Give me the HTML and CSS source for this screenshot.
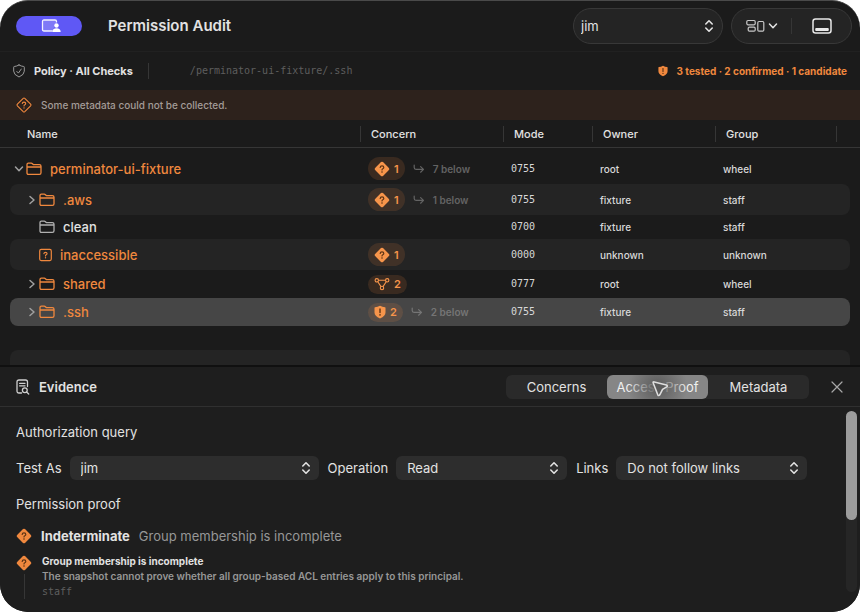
FILE: index.html
```html
<!DOCTYPE html>
<html lang="en">
<head>
<meta charset="utf-8">
<meta name="viewport" content="width=device-width, initial-scale=1">
<title>Permission Audit</title>
<link rel="stylesheet" href="styles.css">
</head>
<body>
<svg class="defs" aria-hidden="true">
  <symbol id="folder" viewBox="0 0 16 14"><path d="M1 11V2.6Q1 1.2 2.4 1.2H5.2Q5.9 1.2 6.4 1.7L7 2.3Q7.4 2.7 8 2.7H13.4Q15 2.7 15 4.2V10.8Q15 12.4 13.4 12.4H2.4Q1 12.4 1 11ZM1 5H15" fill="none" stroke="currentColor" stroke-width="1.3"/></symbol>
  <symbol id="chevron-right" viewBox="0 0 8 10"><path d="M2 1.5L6 5L2 8.5" fill="none" stroke="currentColor" stroke-width="1.5" stroke-linecap="round" stroke-linejoin="round"/></symbol>
  <symbol id="chevron-down" viewBox="0 0 10 8"><path d="M1.5 2L5 5.8L8.5 2" fill="none" stroke="currentColor" stroke-width="1.5" stroke-linecap="round" stroke-linejoin="round"/></symbol>
  <symbol id="diamond-fill" viewBox="0 0 16 16"><path d="M7 1.1Q8 .2 9 1.1L14.9 7Q15.8 8 14.9 9L9 14.9Q8 15.8 7 14.9L1.1 9Q.2 8 1.1 7Z" fill="currentColor"/><path d="M6.2 6.5Q6.3 4.9 8 4.9Q9.8 4.9 9.8 6.4Q9.8 7.3 8.8 7.8Q8 8.2 8 9" fill="none" stroke="#5e3414" stroke-width="1.2" stroke-linecap="round"/><circle cx="8" cy="11" r=".8" fill="#5e3414"/></symbol>
  <symbol id="diamond" viewBox="0 0 16 16"><path d="M7.2 1.4Q8 .7 8.8 1.4L14.6 7.2Q15.3 8 14.6 8.8L8.8 14.6Q8 15.3 7.2 14.6L1.4 8.8Q.7 8 1.4 7.2Z" fill="none" stroke="currentColor" stroke-width="1.1"/><path d="M6.3 6.5Q6.4 5.1 8 5.1Q9.7 5.1 9.7 6.4Q9.7 7.3 8.8 7.8Q8 8.2 8 9" fill="none" stroke="currentColor" stroke-width="1.1" stroke-linecap="round"/><circle cx="8" cy="10.9" r=".7" fill="currentColor"/></symbol>
  <symbol id="shield-fill" viewBox="0 0 12 14"><path d="M6 .8Q8.4 2.2 11 2.3Q11.5 2.4 11.5 3V7.4Q11.5 11 6 13.4Q.5 11 .5 7.4V3Q.5 2.4 1 2.3Q3.6 2.2 6 .8Z" fill="currentColor"/><path d="M6 4V7.6" stroke="#5e3414" stroke-width="1.4" stroke-linecap="round"/><circle cx="6" cy="9.9" r=".8" fill="#5e3414"/></symbol>
  <symbol id="below" viewBox="0 0 12 10"><path d="M1.2 1V3.6Q1.2 5.4 3 5.4H10.4M7.6 2.6L10.5 5.4L7.6 8.2" fill="none" stroke="currentColor" stroke-width="1.2" stroke-linecap="round" stroke-linejoin="round"/></symbol>
  <symbol id="updown" viewBox="0 0 10 14"><path d="M1.8 5L5 1.8L8.2 5M1.8 9L5 12.2L8.2 9" fill="none" stroke="currentColor" stroke-width="1.6" stroke-linecap="round" stroke-linejoin="round"/></symbol>
</svg>

<main class="window">
  <header class="toolbar">
    <button class="mode" type="button" aria-label="Shared screen">
      <svg width="20" height="14" viewBox="0 0 20 14"><path d="M11.5 12H3Q1.5 12 1.5 10.5V2.5Q1.5 1 3 1H14Q15.5 1 15.5 2.5V3.5" fill="#fff" fill-opacity=".2" stroke="#f4f2ff" stroke-width="1.3"/><circle cx="15.5" cy="6.5" r="2.2" fill="#fff"/><path d="M11.3 13Q11.5 9.3 15.5 9.3T19.7 13Z" fill="#fff"/></svg>
    </button>
    <h1>Permission Audit</h1>
    <div class="picker user">
      <select aria-label="User"><option>jim</option></select>
      <svg width="10" height="14"><use href="#updown"/></svg>
    </div>
    <div class="tools">
      <button type="button" aria-label="Layout">
        <svg width="19" height="14" viewBox="0 0 19 14" fill="none" stroke="#c8c8c8" stroke-width="1.2"><rect x=".8" y="1.5" width="8.4" height="4.3" rx="1.2"/><rect x="2.2" y="8.2" width="7" height="4" rx="1.2"/><rect x="11.8" y="2.5" width="6" height="9.7" rx="1.2"/></svg>
        <svg width="10" height="8"><use href="#chevron-down"/></svg>
      </button>
      <span class="rule"></span>
      <button type="button" aria-label="Toggle bottom panel">
        <svg width="20" height="16" viewBox="0 0 20 16"><rect x="1" y="1" width="18" height="14" rx="2.5" fill="none" stroke="#e8e8e8" stroke-width="1.5"/><rect x="3.2" y="10" width="13.6" height="3" rx="1" fill="#e8e8e8"/></svg>
      </button>
    </div>
  </header>

  <div class="policy">
    <svg class="shield" width="12" height="14" viewBox="0 0 12 14" fill="none" stroke="currentColor" stroke-linecap="round" stroke-linejoin="round"><path d="M6 1Q8.3 2.3 10.7 2.5Q11.3 2.5 11.3 3.2V7.2Q11.3 10.7 6 13Q.7 10.7 .7 7.2V3.2Q.7 2.5 1.3 2.5Q3.7 2.3 6 1Z"/><path d="M3.8 7.4L5.4 9.1L8.3 5"/></svg>
    <strong>Policy · All Checks</strong>
    <span class="rule"></span>
    <code>/perminator-ui-fixture/.ssh</code>
    <span class="summary"><svg width="10" height="12"><use href="#shield-fill"/></svg>3 tested · 2 confirmed · 1 candidate</span>
  </div>

  <p class="banner" role="status"><svg width="16" height="16"><use href="#diamond"/></svg>Some metadata could not be collected.</p>

  <section class="files" aria-label="Files">
    <table>
      <colgroup><col class="c-name"><col class="c-concern"><col class="c-mode"><col class="c-owner"><col class="c-group"><col></colgroup>
      <thead><tr><th><span>Name</span></th><th><span>Concern</span></th><th><span>Mode</span></th><th><span>Owner</span></th><th><span>Group</span></th><th><span></span></th></tr></thead>
      <tbody>
        <tr class="root"><td><div class="name"><svg class="arrow" width="10" height="8"><use href="#chevron-down"/></svg><svg width="16" height="14"><use href="#folder"/></svg>perminator-ui-fixture</div></td><td><div class="concern"><span class="badge"><svg width="16" height="16"><use href="#diamond-fill"/></svg>1</span><svg width="12" height="10"><use href="#below"/></svg>7 below</div></td><td class="mono">0755</td><td>root</td><td>wheel</td><td></td></tr>
        <tr class="tall striped"><td><div class="name child"><svg class="arrow" width="8" height="10"><use href="#chevron-right"/></svg><svg width="16" height="14"><use href="#folder"/></svg>.aws</div></td><td><div class="concern"><span class="badge"><svg width="16" height="16"><use href="#diamond-fill"/></svg>1</span><svg width="12" height="10"><use href="#below"/></svg>1 below</div></td><td class="mono">0755</td><td>fixture</td><td>staff</td><td></td></tr>
        <tr class="short"><td><div class="name child plain"><span class="arrow"></span><svg width="16" height="14"><use href="#folder"/></svg>clean</div></td><td></td><td class="mono">0700</td><td>fixture</td><td>staff</td><td></td></tr>
        <tr class="tall striped"><td><div class="name child"><span class="arrow"></span><svg width="13" height="14" viewBox="0 0 13 14"><rect x=".7" y="1.4" width="11.6" height="11.2" rx="1.5" fill="none" stroke="currentColor" stroke-width="1.2"/><path d="M4.9 5.6Q5 4.4 6.5 4.4T8.1 5.6Q8.1 6.4 7.2 6.8Q6.5 7.1 6.5 7.9" fill="none" stroke="currentColor" stroke-width="1.1" stroke-linecap="round"/><circle cx="6.5" cy="9.7" r=".7" fill="currentColor"/></svg>inaccessible</div></td><td><div class="concern"><span class="badge"><svg width="16" height="16"><use href="#diamond-fill"/></svg>1</span></div></td><td class="mono">0000</td><td>unknown</td><td>unknown</td><td></td></tr>
        <tr class="mid"><td><div class="name child"><svg class="arrow" width="8" height="10"><use href="#chevron-right"/></svg><svg width="16" height="14"><use href="#folder"/></svg>shared</div></td><td><div class="concern"><span class="badge low"><svg width="16" height="14" viewBox="0 0 16 14" fill="none" stroke="currentColor" stroke-width="1.1"><circle cx="2.8" cy="3.3" r="1.7"/><circle cx="13.2" cy="3.3" r="1.7"/><circle cx="8" cy="11" r="1.7"/><path d="M4.5 3.3H11.5M3.8 4.7L7 9.6M12.2 4.7L9 9.6"/></svg>2</span></div></td><td class="mono">0777</td><td>root</td><td>wheel</td><td></td></tr>
        <tr class="mid selected"><td><div class="name child"><svg class="arrow" width="8" height="10"><use href="#chevron-right"/></svg><svg width="16" height="14"><use href="#folder"/></svg>.ssh</div></td><td><div class="concern"><span class="badge low"><svg width="12" height="14"><use href="#shield-fill"/></svg>2</span><svg width="12" height="10"><use href="#below"/></svg>2 below</div></td><td class="mono">0755</td><td>fixture</td><td>staff</td><td></td></tr>
        <tr class="short" aria-hidden="true"><td></td><td></td><td></td><td></td><td></td><td></td></tr>
        <tr class="short striped" aria-hidden="true"><td></td><td></td><td></td><td></td><td></td><td></td></tr>
      </tbody>
    </table>
  </section>

  <section class="evidence">
    <header class="evidence-head">
      <svg width="14" height="16" viewBox="0 0 14 16" fill="none" stroke="#d0d0d0" stroke-width="1.3" stroke-linecap="round"><path d="M5.5 14H3Q1 14 1 12V3Q1 1 3 1H9.5Q11.5 1 11.5 3V7.5M3.6 4.3H9M3.6 6.8H9"/><circle cx="8.8" cy="11.3" r="2.4"/><path d="M10.6 13.1L12.7 15"/></svg>
      <h2>Evidence</h2>
      <div class="segments" role="tablist">
        <button type="button" role="tab">Concerns</button>
        <button type="button" role="tab" aria-selected="true" class="active">Access Proof
          <svg class="pointer" width="20" height="20" viewBox="0 0 18 18" aria-hidden="true"><path d="M2.9 3.6Q2.3 2.3 3.8 2.6L14.8 5.4Q16.3 6.1 15 7.1L11.3 9.4L8.8 14.2Q7.8 15.6 7 14.2Z" fill="#5a5a5a" stroke="#dedede" stroke-width="1.4" stroke-linejoin="round"/></svg>
        </button>
        <button type="button" role="tab">Metadata</button>
      </div>
      <button class="close" type="button" aria-label="Close"><svg width="12" height="12" viewBox="0 0 12 12"><path d="M1 1L11 11M11 1L1 11" stroke="#a8a8a8" stroke-width="1.2" stroke-linecap="round"/></svg></button>
    </header>
    <div class="evidence-body">
      <div class="content">
        <h3>Authorization query</h3>
        <form class="query">
          <label for="who">Test As</label>
          <div class="picker w-who"><select id="who"><option>jim</option></select><svg width="10" height="14"><use href="#updown"/></svg></div>
          <label for="op">Operation</label>
          <div class="picker w-op"><select id="op"><option>Read</option></select><svg width="10" height="14"><use href="#updown"/></svg></div>
          <label for="links">Links</label>
          <div class="picker w-links"><select id="links"><option>Do not follow links</option></select><svg width="10" height="14"><use href="#updown"/></svg></div>
        </form>
        <h3>Permission proof</h3>
        <p class="verdict"><svg width="16" height="16"><use href="#diamond-fill"/></svg><strong>Indeterminate</strong><span>Group membership is incomplete</span></p>
        <div class="step">
          <div class="marker"><svg width="16" height="16"><use href="#diamond-fill"/></svg><i></i></div>
          <div><h4>Group membership is incomplete</h4><p>The snapshot cannot prove whether all group-based ACL entries apply to this principal.</p><code>staff</code></div>
        </div>
      </div>
      <div class="scrollbar" aria-hidden="true"><i></i></div>
    </div>
  </section>
</main>
</body>
</html>
```
FILE: styles.css
```css
* { box-sizing: border-box; margin: 0; padding: 0; }

:root {
  --orange: #f0883e;
  --mono: "DejaVu Sans Mono", "Liberation Mono", monospace;
}

body {
  background: #fff;
  color: #e2e2e2;
  font: 13px/16px Inter, "Liberation Sans", sans-serif;
}

button, select { font: inherit; color: inherit; border: 0; background: none; }
svg { flex: none; display: block; }
.defs { position: absolute; width: 0; height: 0; }

.window {
  display: flex;
  flex-direction: column;
  height: 100vh;
  overflow: hidden;
  background: #1b1b1b;
  border-top: 1px solid #4a4a4a;
  border-radius: 28px;
}

.rule { width: 1px; height: 16px; background: #363636; }

/* Toolbar */
.toolbar {
  display: flex;
  align-items: center;
  flex: none;
  height: 51px;
  padding: 0 8px 0 16px;
  border-bottom: 1px solid #212121;
}
.mode {
  display: flex;
  align-items: center;
  justify-content: center;
  width: 66px;
  height: 20px;
  padding-left: 4px;
  border-radius: 10px;
  background: #5f58f5;
}
h1 { flex: 1; margin-left: 26px; font-size: 15px; line-height: 20px; font-weight: 600; }

.picker { display: flex; align-items: center; position: relative; border-radius: 6px; background: #2d2d2d; }
.picker select { appearance: none; width: 100%; height: 24px; padding: 0 24px 0 11px; border-radius: inherit; outline: 0; }
.picker svg { position: absolute; right: 8px; pointer-events: none; }
.picker.user { width: 150px; margin-right: 8px; border: 1px solid #383838; border-radius: 18px; background: #242424; }
.picker.user select { height: 34px; padding-left: 7px; }

.tools {
  display: flex;
  align-items: center;
  width: 121px;
  height: 36px;
  border: 1px solid #383838;
  border-radius: 18px;
  background: #242424;
}
.tools button { display: flex; align-items: center; justify-content: center; gap: 3px; flex: 1; height: 100%; }

/* Policy bar */
.policy { display: flex; align-items: center; flex: none; height: 38px; padding: 0 13px; }
.shield { color: #9a9a9a; }
.policy strong { margin: 0 15px 0 9px; font-size: 11px; font-weight: 700; }
.policy code { flex: 1; margin-left: 41px; color: #5e5e5e; font: 10px/16px var(--mono); }
.summary { display: flex; align-items: center; gap: 9px; color: var(--orange); font-size: 10px; font-weight: 700; }

.banner {
  display: flex;
  align-items: center;
  flex: none;
  gap: 9px;
  height: 30px;
  padding: 0 16px;
  background: #2d221c;
  color: #a39c98;
  font-size: 10px;
  font-weight: 500;
}
.banner svg { color: var(--orange); }

/* File table */
.files { flex: 1; min-height: 0; overflow: hidden; padding: 0 10px; }
table { width: 100%; table-layout: fixed; border-collapse: separate; border-spacing: 0; }
.c-name { width: 350px; }
.c-concern { width: 143px; }
.c-mode { width: 89px; }
.c-owner { width: 123px; }
.c-group { width: 121px; }
thead tr { position: relative; height: 28px; }
th:first-child::after { content: ""; position: absolute; left: -10px; right: -10px; bottom: 0; height: 1px; background: #363636; }
th { padding: 0; text-align: left; font-size: 11px; font-weight: 500; }
th span { display: block; height: 16px; padding-left: 10px; border-left: 1px solid #363636; }
th:first-child span { padding-left: 16px; border-color: transparent; }
td { padding: 0 8px; font-size: 10px; font-weight: 500; color: #d8d8d8; }
td:first-child { padding: 0; border-radius: 8px 0 0 8px; }
td:last-child { padding: 0; border-radius: 0 8px 8px 0; }
.mono { font-family: var(--mono); }
.root { height: 36px; }
.root td { padding-top: 5px; }
.tall { height: 31px; }
.mid { height: 28px; }
.short { height: 24px; }
.striped td { background: #242424; }
.selected td { background: #464646; }

.name { display: flex; align-items: center; gap: 8px; padding-left: 4px; color: var(--orange); font-size: 13px; }
.name.child { padding-left: 17px; }
.name.plain { color: #e2e2e2; }
.name.plain svg { color: #b0b0b0; }
.name .arrow { width: 10px; margin-right: -6px; color: #a0a0a0; }

.concern { display: flex; align-items: center; gap: 8px; color: #636363; font-weight: 600; }
.selected .concern { color: #757575; }
.badge {
  display: flex;
  align-items: center;
  gap: 4px;
  height: 23px;
  padding: 0 6px;
  border-radius: 12px;
  background: rgb(240 136 62 / 14%);
  color: #f7954b;
  font-size: 11px;
}
.badge.low { height: 19px; }

/* Evidence panel */
.evidence {
  display: flex;
  flex-direction: column;
  flex: none;
  height: 247px;
  border-top: 2px solid #101010;
  background: #1e1e1e;
}
.evidence-head { display: flex; align-items: center; flex: none; height: 40px; padding: 0 17px 0 16px; border-bottom: 1px solid #303030; }
h2 { flex: 1; margin-left: 9px; font-size: 13px; font-weight: 600; }
.segments { display: flex; border-radius: 6px; background: #2a2a2a; }
.segments button { position: relative; width: 101px; height: 24px; border-radius: 6px; }
.segments .active { background: #868686; color: #f0f0f0; }
.segments .active::after {
  content: "";
  position: absolute;
  inset: 0;
  border-radius: inherit;
  background: radial-gradient(circle at 50% 50%, rgb(84 84 84 / 90%) 0, rgb(92 92 92 / 75%) 8px, rgb(110 110 110 / 0%) 30px);
}
.pointer { position: absolute; z-index: 1; left: 43px; top: 4px; }
.close { display: flex; margin-left: 22px; padding: 0; }

.evidence-body { display: flex; flex: 1; min-height: 0; }
.content { flex: 1; min-width: 0; overflow: hidden; padding: 17px 0 0 16px; }
h3 { font-size: 13px; font-weight: 400; }
.query { display: flex; align-items: center; gap: 8px; margin: 16px 0; }
.query label { flex: none; }
.query .picker { min-width: 0; }
.query .picker + label { margin-left: 1px; }
.w-who { flex: 0 1 249px; }
.w-op { flex: 0 1 171px; }
.w-links { flex: 0 1 191px; }
.verdict { display: flex; align-items: center; gap: 9px; margin-top: 16px; color: #979797; }
.verdict svg, .marker svg { color: var(--orange); }
.verdict strong { color: #e2e2e2; font-weight: 700; }
.step { display: flex; gap: 10px; margin-top: 10px; font-size: 10px; line-height: 15px; color: #979797; font-weight: 600; }
.step h4 { color: #e2e2e2; font-size: 10px; font-weight: 700; }
.step code { display: block; color: #5e5e5e; font: 10px/15px var(--mono); }
.marker { display: flex; flex-direction: column; align-items: center; gap: 3px; padding-top: 1px; }
.marker i { flex: 1; width: 1px; background: #363636; }

.scrollbar { flex: none; width: 11px; margin: 4px 3px 20px 0; border-radius: 6px; background: #262626; }
.scrollbar i { display: block; height: 60%; border-radius: 6px; background: #9c9c9c; }
```
